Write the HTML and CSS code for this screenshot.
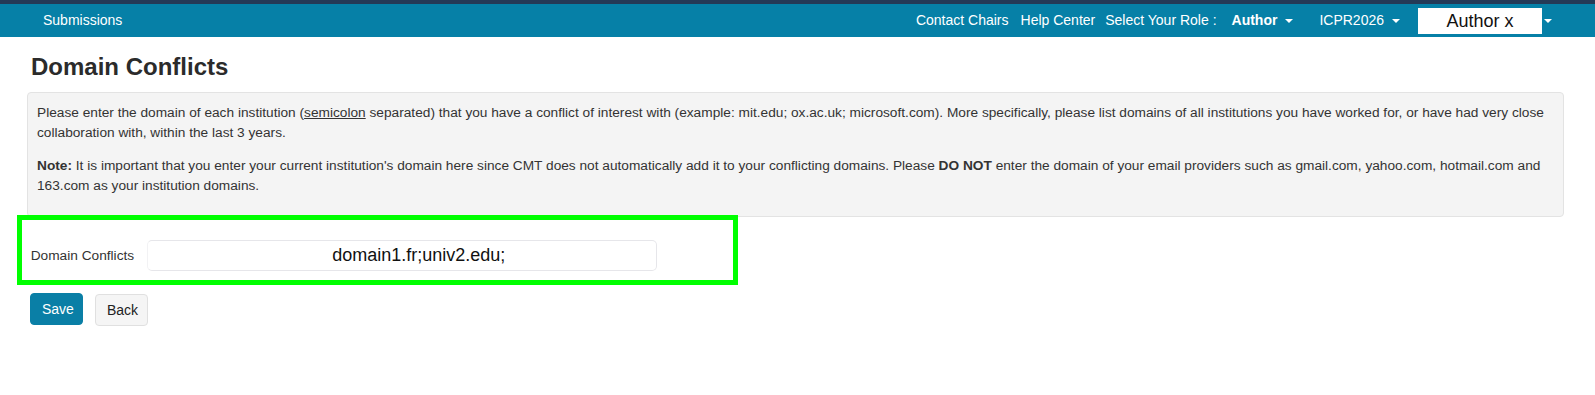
FILE: index.html
```html
<!DOCTYPE html>
<html lang="en">
<head>
<meta charset="utf-8">
<title>Domain Conflicts</title>
<link rel="stylesheet" href="styles.css">
</head>
<body>
<div class="topstrip"></div>
<nav class="navbar">
  <div class="nav-left"><span class="nav-item">Submissions</span></div>
  <div class="nav-right">
    <span class="nav-item contact">Contact Chairs</span>
    <span class="nav-item help">Help Center</span>
    <span class="nav-item role">Select Your Role :</span>
    <span class="nav-item author"><b>Author</b><span class="caret"></span></span>
    <span class="nav-item conf">ICPR2026<span class="caret"></span></span>
    <span class="nav-item user"><span class="userbox">Author x</span><span class="caret user-caret"></span></span>
  </div>
</nav>
<main class="main">
  <h2 class="title">Domain Conflicts</h2>
  <div class="well">
    <p>Please enter the domain of each institution (<u>semicolon</u> separated) that you have a conflict of interest with (example: mit.edu; ox.ac.uk; microsoft.com). More specifically, please list domains of all institutions you have worked for, or have had very close collaboration with, within the last 3 years.</p>
    <p><b>Note:</b> It is important that you enter your current institution's domain here since CMT does not automatically add it to your conflicting domains. Please <b>DO NOT</b> enter the domain of your email providers such as gmail.com, yahoo.com, hotmail.com and 163.com as your institution domains.</p>
  </div>
  <div class="form-row">
    <label class="form-label" for="dc">Domain Conflicts</label>
    <input class="form-input" id="dc" type="text" value="domain1.fr;univ2.edu;">
  </div>
  <div class="actions">
    <button class="btn btn-primary">Save</button>
    <button class="btn btn-default">Back</button>
  </div>
</main>
</body>
</html>
```

FILE: styles.css
```css
html, body {
  margin: 0;
  padding: 0;
}
body {
  font-family: "Liberation Sans", Arial, Helvetica, sans-serif;
  font-size: 14px;
  line-height: 1.42857;
  color: #333;
  background: #fff;
}
.topstrip {
  height: 4px;
  background: #243a57;
}
.navbar {
  height: 33px;
  background: #0680a7;
  display: flex;
  align-items: center;
  justify-content: space-between;
  padding: 0 43px 0 43px;
  color: #fff;
}
.nav-right {
  display: flex;
  align-items: center;
}
.nav-item {
  display: flex;
  align-items: center;
  white-space: nowrap;
}
.contact { margin-right: 12px; }
.help { margin-right: 10px; }
.role { margin-right: 15px; }
.author { margin-right: 26px; }
.conf { margin-right: 18px; }
.caret {
  display: inline-block;
  width: 0;
  height: 0;
  border-top: 4px solid #fff;
  border-left: 4px solid transparent;
  border-right: 4px solid transparent;
  margin-left: 8px;
  margin-top: 1px;
}
.userbox {
  display: block;
  width: 124px;
  height: 26px;
  margin-top: 1px;
  background: #fff;
  color: #111;
  font-size: 18px;
  line-height: 26px;
  text-align: center;
}
.user-caret {
  margin-left: 2px;
}
.main {
  padding: 0 31px 0 27px;
}
.title {
  margin: 16.5px 0 12px 4px;
  font-size: 24px;
  line-height: 26.4px;
  font-weight: bold;
  color: #2b2b2b;
}
.well {
  background: #f4f4f4;
  border: 1px solid #e3e3e3;
  border-radius: 4px;
  padding: 10px 9px 7px;
  font-size: 13.7px;
  line-height: 20px;
  color: #333;
}
.well p {
  margin: 0 0 13px;
}
.form-row {
  box-sizing: border-box;
  width: 721px;
  margin: -2px 0 0 -10px;
  border: 5px solid #00ff00;
  padding: 20px 0 9px 8.7px;
  display: flex;
  align-items: center;
}
.form-label {
  width: 116px;
  font-size: 13.7px;
  color: #333;
}
.form-input {
  box-sizing: border-box;
  width: 510px;
  height: 31px;
  margin: 0;
  border: 1px solid #e6e6ea;
  border-left-color: #f2f2f4;
  border-radius: 5px;
  padding: 0 0 0 184.5px;
  background: #fff;
  font-family: "Liberation Sans", Arial, Helvetica, sans-serif;
  font-size: 18px;
  color: #111;
  outline: none;
}
.actions {
  display: flex;
  gap: 12px;
  margin-top: 8.3px;
  padding-left: 3px;
}
.btn {
  box-sizing: border-box;
  height: 32px;
  padding: 0 11px;
  border-radius: 4px;
  font-family: "Liberation Sans", Arial, Helvetica, sans-serif;
  font-size: 14px;
  cursor: pointer;
}
.btn-primary {
  background: #0a7fa6;
  border: 1px solid #0a7fa6;
  color: #fff;
  width: 53px;
}
.btn-default {
  background: #f5f5f5;
  border: 1px solid #e0e0e0;
  color: #222;
  width: 53px;
  height: 31.5px;
  margin-top: 1px;
}
```
